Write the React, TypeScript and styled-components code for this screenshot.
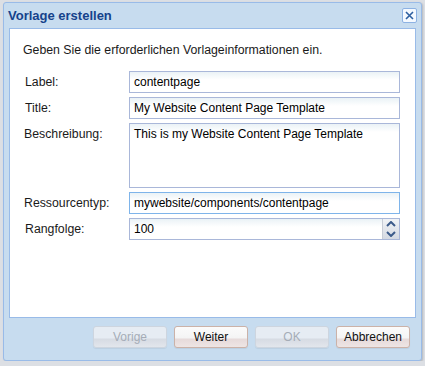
import React from 'react';
import styled, { createGlobalStyle } from 'styled-components';

const GlobalStyle = createGlobalStyle`
  html, body {
    margin: 0;
    padding: 0;
    background: #dcdfe4;
  }
  body {
    font-family: 'Liberation Sans', Arial, sans-serif;
  }
`;

const Window = styled.div`
  box-sizing: border-box;
  margin: 2px 0 0 3px;
  width: 419px;
  height: 359px;
  border: 1px solid #99bbe8;
  border-radius: 3px;
  background: #c7dcef;
  display: flex;
  flex-direction: column;
  box-shadow: 1px 1px 2px rgba(0, 0, 0, 0.18);
`;

const TitleBar = styled.div`
  height: 25px;
  display: flex;
  align-items: center;
  justify-content: space-between;
  padding: 0 4px 0 4px;
`;

const Title = styled.span`
  font-size: 13px;
  font-weight: bold;
  color: #15428b;
`;

const CloseButton = styled.div`
  box-sizing: border-box;
  width: 15px;
  height: 15px;
  border: 1px solid #8db2e3;
  border-radius: 2px;
  background: #f4f9ff;
  display: flex;
  align-items: center;
  justify-content: center;
`;

const Panel = styled.div`
  box-sizing: border-box;
  margin: 0 5px;
  height: 290px;
  background: #fff;
  border: 1px solid #99bbe8;
  padding: 14px 0 0 13px;
`;

const Intro = styled.div`
  font-size: 12.3px;
  color: #1a1a1a;
  margin-bottom: 14px;
`;

const Form = styled.div`
  display: grid;
  grid-template-columns: 106px 271px;
  row-gap: 4px;
`;

const Label = styled.div<{ $indent?: number }>`
  font-size: 12.3px;
  color: #1a1a1a;
  padding-left: ${({ $indent }) => $indent ?? 2}px;
  padding-top: 4px;
`;

const Field = styled.div<{ $height?: number; $focus?: boolean }>`
  box-sizing: border-box;
  position: relative;
  height: ${({ $height }) => $height ?? 22}px;
  border: 1px solid ${({ $focus }) => ($focus ? '#7eb4ea' : '#a9b7d9')};
  background: linear-gradient(#eaf2f6 0px, #ffffff 8px);
  font-size: 12px;
  color: #000;
  padding: 3px 4px 0 4px;
`;

const Spinner = styled.div`
  position: absolute;
  right: 0;
  top: 0;
  bottom: 0;
  width: 16px;
  background: linear-gradient(#f1f3f6, #d4d9e2);
  border-left: 1px solid #c7ccd6;
  display: flex;
  flex-direction: column;
  align-items: center;
  justify-content: space-around;
`;

const Footer = styled.div`
  flex: 1;
  display: flex;
  justify-content: flex-end;
  align-items: flex-start;
  gap: 7px;
  padding: 8px 11px 0 0;
`;

const Button = styled.div<{ $disabled?: boolean }>`
  box-sizing: border-box;
  width: 74px;
  height: 22px;
  border-radius: 3px;
  border: 1px solid ${({ $disabled }) => ($disabled ? '#cdd5df' : '#cbb2a8')};
  background: ${({ $disabled }) =>
    $disabled
      ? 'linear-gradient(#e6ecf3 0%, #e6ecf3 55%, #d6dbe3 60%, #e2e6ec 100%)'
      : 'linear-gradient(#fbfbfb 0%, #f4f4f4 55%, #e6dada 60%, #eee5e4 100%)'};
  color: ${({ $disabled }) => ($disabled ? '#a5acb7' : '#111')};
  font-family: 'Liberation Sans', Arial, sans-serif;
  font-size: 12px;
  display: flex;
  align-items: center;
  justify-content: center;
  box-shadow: 0 1px 1px rgba(0, 0, 0, 0.06);
`;

const Arrow = ({ up }: { up?: boolean }) => (
  <svg width="10" height="6" viewBox="0 0 10 6">
    <path
      d={up ? 'M1 5 L5 1 L9 5' : 'M1 1 L5 5 L9 1'}
      fill="none"
      stroke="#3b5a8a"
      strokeWidth="2"
    />
  </svg>
);

export default function App() {
  return (
    <>
      <GlobalStyle />
      <Window>
        <TitleBar>
          <Title>Vorlage erstellen</Title>
          <CloseButton>
            <svg width="9" height="9" viewBox="0 0 9 9">
              <path d="M1 1 L8 8 M8 1 L1 8" stroke="#2d5fa0" strokeWidth="1.6" />
            </svg>
          </CloseButton>
        </TitleBar>
        <Panel>
          <Intro>Geben Sie die erforderlichen Vorlageinformationen ein.</Intro>
          <Form>
            <Label>Label:</Label>
            <Field>contentpage</Field>
            <Label>Title:</Label>
            <Field>My Website Content Page Template</Field>
            <Label $indent={1}>Beschreibung:</Label>
            <Field $height={65}>This is my Website Content Page Template</Field>
            <Label $indent={1}>Ressourcentyp:</Label>
            <Field $focus>mywebsite/components/contentpage</Field>
            <Label>Rangfolge:</Label>
            <Field>
              100
              <Spinner>
                <Arrow up />
                <Arrow />
              </Spinner>
            </Field>
          </Form>
        </Panel>
        <Footer>
          <Button $disabled>Vorige</Button>
          <Button>Weiter</Button>
          <Button $disabled>OK</Button>
          <Button>Abbrechen</Button>
        </Footer>
      </Window>
    </>
  );
}
